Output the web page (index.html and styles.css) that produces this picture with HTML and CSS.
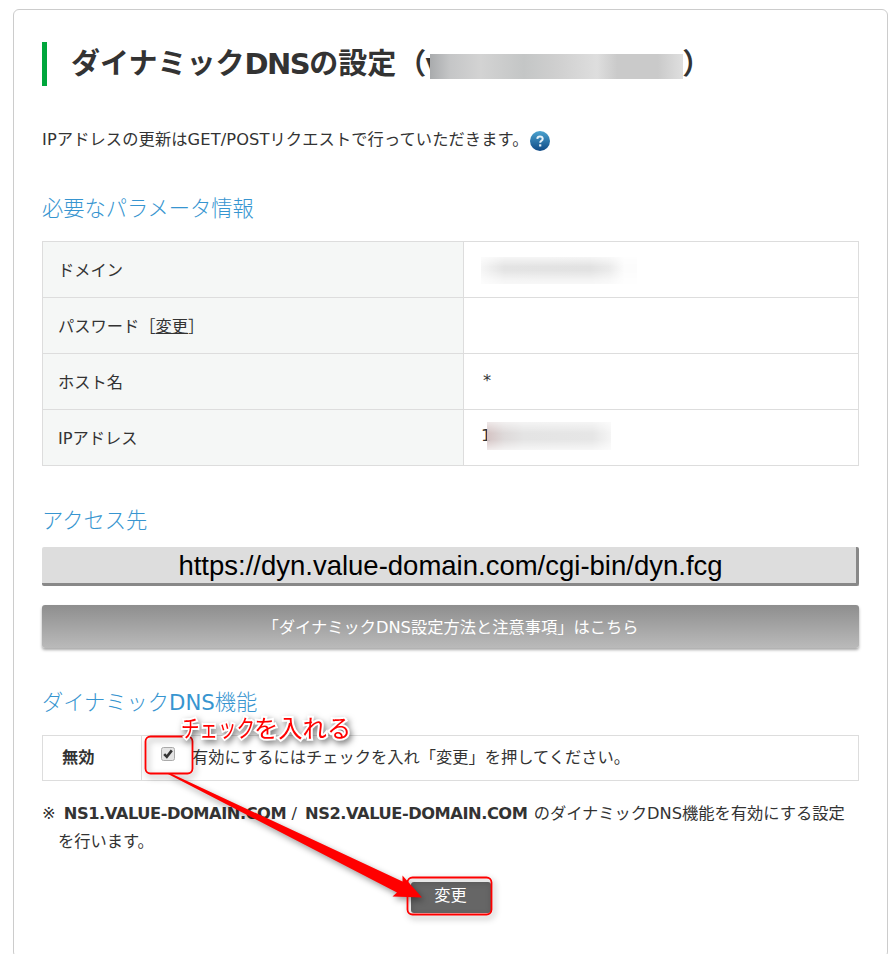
FILE: index.html
```html
<!DOCTYPE html>
<html lang="ja">
<head>
<meta charset="utf-8">
<title>ダイナミックDNSの設定</title>
<link rel="stylesheet" href="styles.css">
</head>
<body>
<main class="panel">
  <h1 class="page-title"><span>ダイナミック<span class="latin">DNS</span>の設定</span><span class="paren open">（</span><span class="masked-name"><span class="peek">v</span><span class="mask"></span></span><span class="paren">）</span></h1>
  <p class="lead">IPアドレスの更新はGET/POSTリクエストで行っていただきます。<svg class="help" viewBox="0 0 20 20" aria-hidden="true"><defs><linearGradient id="hg" x1="0" y1="0" x2="0" y2="1"><stop offset="0" stop-color="#4ba3cf"/><stop offset="1" stop-color="#0f4a86"/></linearGradient></defs><circle cx="10" cy="10" r="10" fill="url(#hg)"/><path d="M7.3 7.8Q7.5 5.5 10 5.5T12.7 7.7Q12.7 9 11.3 9.8Q10.2 10.5 10.2 11.8" fill="none" stroke="#e8f2f8" stroke-width="2"/><rect x="9.1" y="13.3" width="2.2" height="2.2" fill="#e8f2f8"/></svg></p>

  <h2 class="section-title">必要なパラメータ情報</h2>
  <table class="params">
    <tr><th>ドメイン</th><td><span class="blur blur-domain"></span></td></tr>
    <tr><th>パスワード［<a href="#">変更</a>］</th><td></td></tr>
    <tr><th>ホスト名</th><td><span class="star">*</span></td></tr>
    <tr><th>IPアドレス</th><td><div class="ip"><span class="one">1</span><span class="blur blur-ip"></span></div></td></tr>
  </table>

  <h2 class="section-title access">アクセス先</h2>
  <div class="url">https://dyn.value-domain.com/cgi-bin/dyn.fcg</div>
  <a class="guide" href="#">「ダイナミックDNS設定方法と注意事項」はこちら</a>

  <h2 class="section-title feature">ダイナミック<span class="book">DNS</span>機能</h2>
  <div class="toggle">
    <strong class="state">無効</strong>
    <div class="choice">
      <svg class="check" viewBox="0 0 14 14" aria-hidden="true"><rect x=".5" y=".5" width="13" height="13" rx="2" fill="#e4e4e4" stroke="#aaa"/><path d="M3.2 7.2L5.8 9.8L10.8 3.4" fill="none" stroke="#333" stroke-width="2.6"/></svg>
      <span class="choice-text">有効にするにはチェックを入れ「変更」を押してください。</span>
    </div>
  </div>
  <p class="note">※ <b>NS1.VALUE-DOMAIN.COM</b> / <b>NS2.VALUE-DOMAIN.COM</b> <span class="note-tail">のダイナミックDNS機能を有効にする設定</span><br>を行います。</p>
  <div class="actions"><button class="submit">変更</button></div>
</main>

<svg class="marks" viewBox="0 0 892 954" aria-hidden="true">
  <g class="mark-shapes">
    <rect x="145.5" y="736.5" width="47" height="37" rx="5" fill="none" stroke="#f00" stroke-width="1.8"/>
    <rect x="407.5" y="877.5" width="84" height="37" rx="5" fill="none" stroke="#f00" stroke-width="1.8"/>
    <path d="M167 773.5L171 773.5L402.5 881.5V875.5L422 897.5L392.5 896.5L397 892.5Z" fill="#f00"/>
  </g>
</svg>
<div class="callout"><span class="narrow">チェック</span><span>を入れる</span></div>
</body>
</html>
```
FILE: styles.css
```css
* { box-sizing: border-box; }
html, body { margin: 0; height: 954px; overflow: hidden; }
body {
  position: relative;
  background: #fff;
  color: #333;
  font: 400 16.25px/28px "DejaVu Sans", "Noto Sans CJK JP", sans-serif;
}
.panel {
  margin: 9px 4px 0 13px;
  height: 949px;
  padding: 32px 28px 0;
  border: 1px solid #ccc;
  border-radius: 6px;
}
.page-title {
  display: flex;
  align-items: center;
  height: 44px;
  margin: 0;
  padding-left: 24px;
  border-left: 5px solid #00a63c;
  font-size: 29px;
  line-height: 44px;
  white-space: nowrap;
}
.latin { letter-spacing: -1.5px; }
.paren { margin-left: -2px; width: 28px; }
.paren.open { margin-left: 1px; width: 29px; }
.masked-name { position: relative; width: 258px; height: 44px; }
.peek { position: absolute; left: -1px; }
.mask {
  position: absolute;
  left: 4px;
  top: 12px;
  width: 253px;
  height: 25px;
  background: linear-gradient(90deg, #a9abad 0, #c5c6c7 8%, #d3d3d3 20%, #c4c6c6 37%, #cfcfcf 50%, #dedede 66%, #cacaca 74%, #cacaca 90%, #dfdfdf);
}
.lead { display: flex; align-items: center; height: 28px; margin: 40px 0 0; letter-spacing: .1px; white-space: nowrap; }
.help { width: 20px; height: 20px; margin: 1px 0 0 1px; }
.section-title {
  margin: 39px 0 0;
  height: 32px;
  color: #3795d0;
  font-size: 21.25px;
  font-weight: 300;
  line-height: 32px;
}
.book { font-weight: 400; }
.params {
  width: 817px;
  margin-top: 16px;
  border-collapse: collapse;
  table-layout: fixed;
}
.params th, .params td { height: 56px; border: 1px solid #ddd; padding: 0 0 0 15px; text-align: left; }
.params th { width: 421px; padding-top: 2px; background: #f5f7f6; font-weight: 400; }
.params td { padding-left: 17px; }
.params a { color: inherit; }
.blur { display: block; }
.blur-domain {
  width: 156px;
  height: 27px;
  margin-top: 2px;
  background: #fbfbfb linear-gradient(90deg, #f6f6f6, #e4e4e4 15%, #e2e2e2 70%, #ebebeb 82%, #fcfcfc 92%);
  -webkit-mask-image: linear-gradient(#0005, #000 35%, #000 50%, #0006 85%, #0004);
}
.blur-ip {
  width: 124px;
  height: 28px;
  background: linear-gradient(90deg, #d5c4c4, #dedada 14%, #e4e4e4 30%, #e6e6e6 85%, #f5f5f5);
  -webkit-mask-image: linear-gradient(#0006, #000 40%, #000 62%, #0005);
}
.ip { display: flex; height: 28px; margin-top: -3px; }
.one { width: 6px; }
.star { position: relative; left: 2px; top: -1px; }
.access { margin-top: 39px; }
.url {
  height: 39px;
  margin-top: 10px;
  border: solid #888;
  border-width: 0 3px 3px 0;
  border-radius: 2px;
  background: #ddd;
  color: #000;
  font: 27.5px/37px "Liberation Sans", sans-serif;
  text-align: center;
  padding-left: 3px;
}
.guide {
  display: block;
  height: 43px;
  margin-top: 19px;
  border-radius: 3px;
  background: linear-gradient(#8e8e8e, #bababa);
  box-shadow: 0 2px 3px rgba(0, 0, 0, .35);
  color: #fff;
  line-height: 45px;
  text-align: center;
  text-decoration: none;
}
.feature { margin-top: 39px; }
.toggle { display: flex; height: 46px; margin-top: 16px; border: 1px solid #ddd; line-height: 44px; }
.state { width: 99px; padding-left: 19px; border-right: 1px solid #ddd; }
.choice { display: flex; }
.check { width: 14px; height: 14px; margin: 11px 0 0 19px; }
.choice-text { margin-left: 17px; white-space: nowrap; }
.note { margin: 19px 0 0; padding-left: 16px; text-indent: -16px; white-space: nowrap; }
.note b { margin-left: 3px; font-weight: 700; letter-spacing: -.45px; }
.note-tail { margin-left: 1px; }
.actions { display: flex; justify-content: center; margin-top: 26px; }
.submit {
  width: 80px;
  height: 31px;
  padding: 0 0 3px;
  border: 0;
  border-radius: 3px;
  background: #666;
  color: #fff;
  font: inherit;
  line-height: 28px;
}
.marks { position: absolute; inset: 0; width: 892px; height: 954px; }
.mark-shapes { filter: drop-shadow(2px 3px 3px rgba(0, 0, 0, .4)); }
.callout {
  position: absolute;
  left: 181px;
  top: 711px;
  display: flex;
  color: #f00;
  font-size: 24.3px;
  font-weight: 400;
  line-height: 36px;
  white-space: nowrap;
  -webkit-text-stroke: 4px #fff;
  paint-order: stroke fill;
  filter: drop-shadow(2px 3px 3px rgba(0, 0, 0, .5));
}
.narrow { width: 73px; transform: scaleX(.76); transform-origin: left; }
```
